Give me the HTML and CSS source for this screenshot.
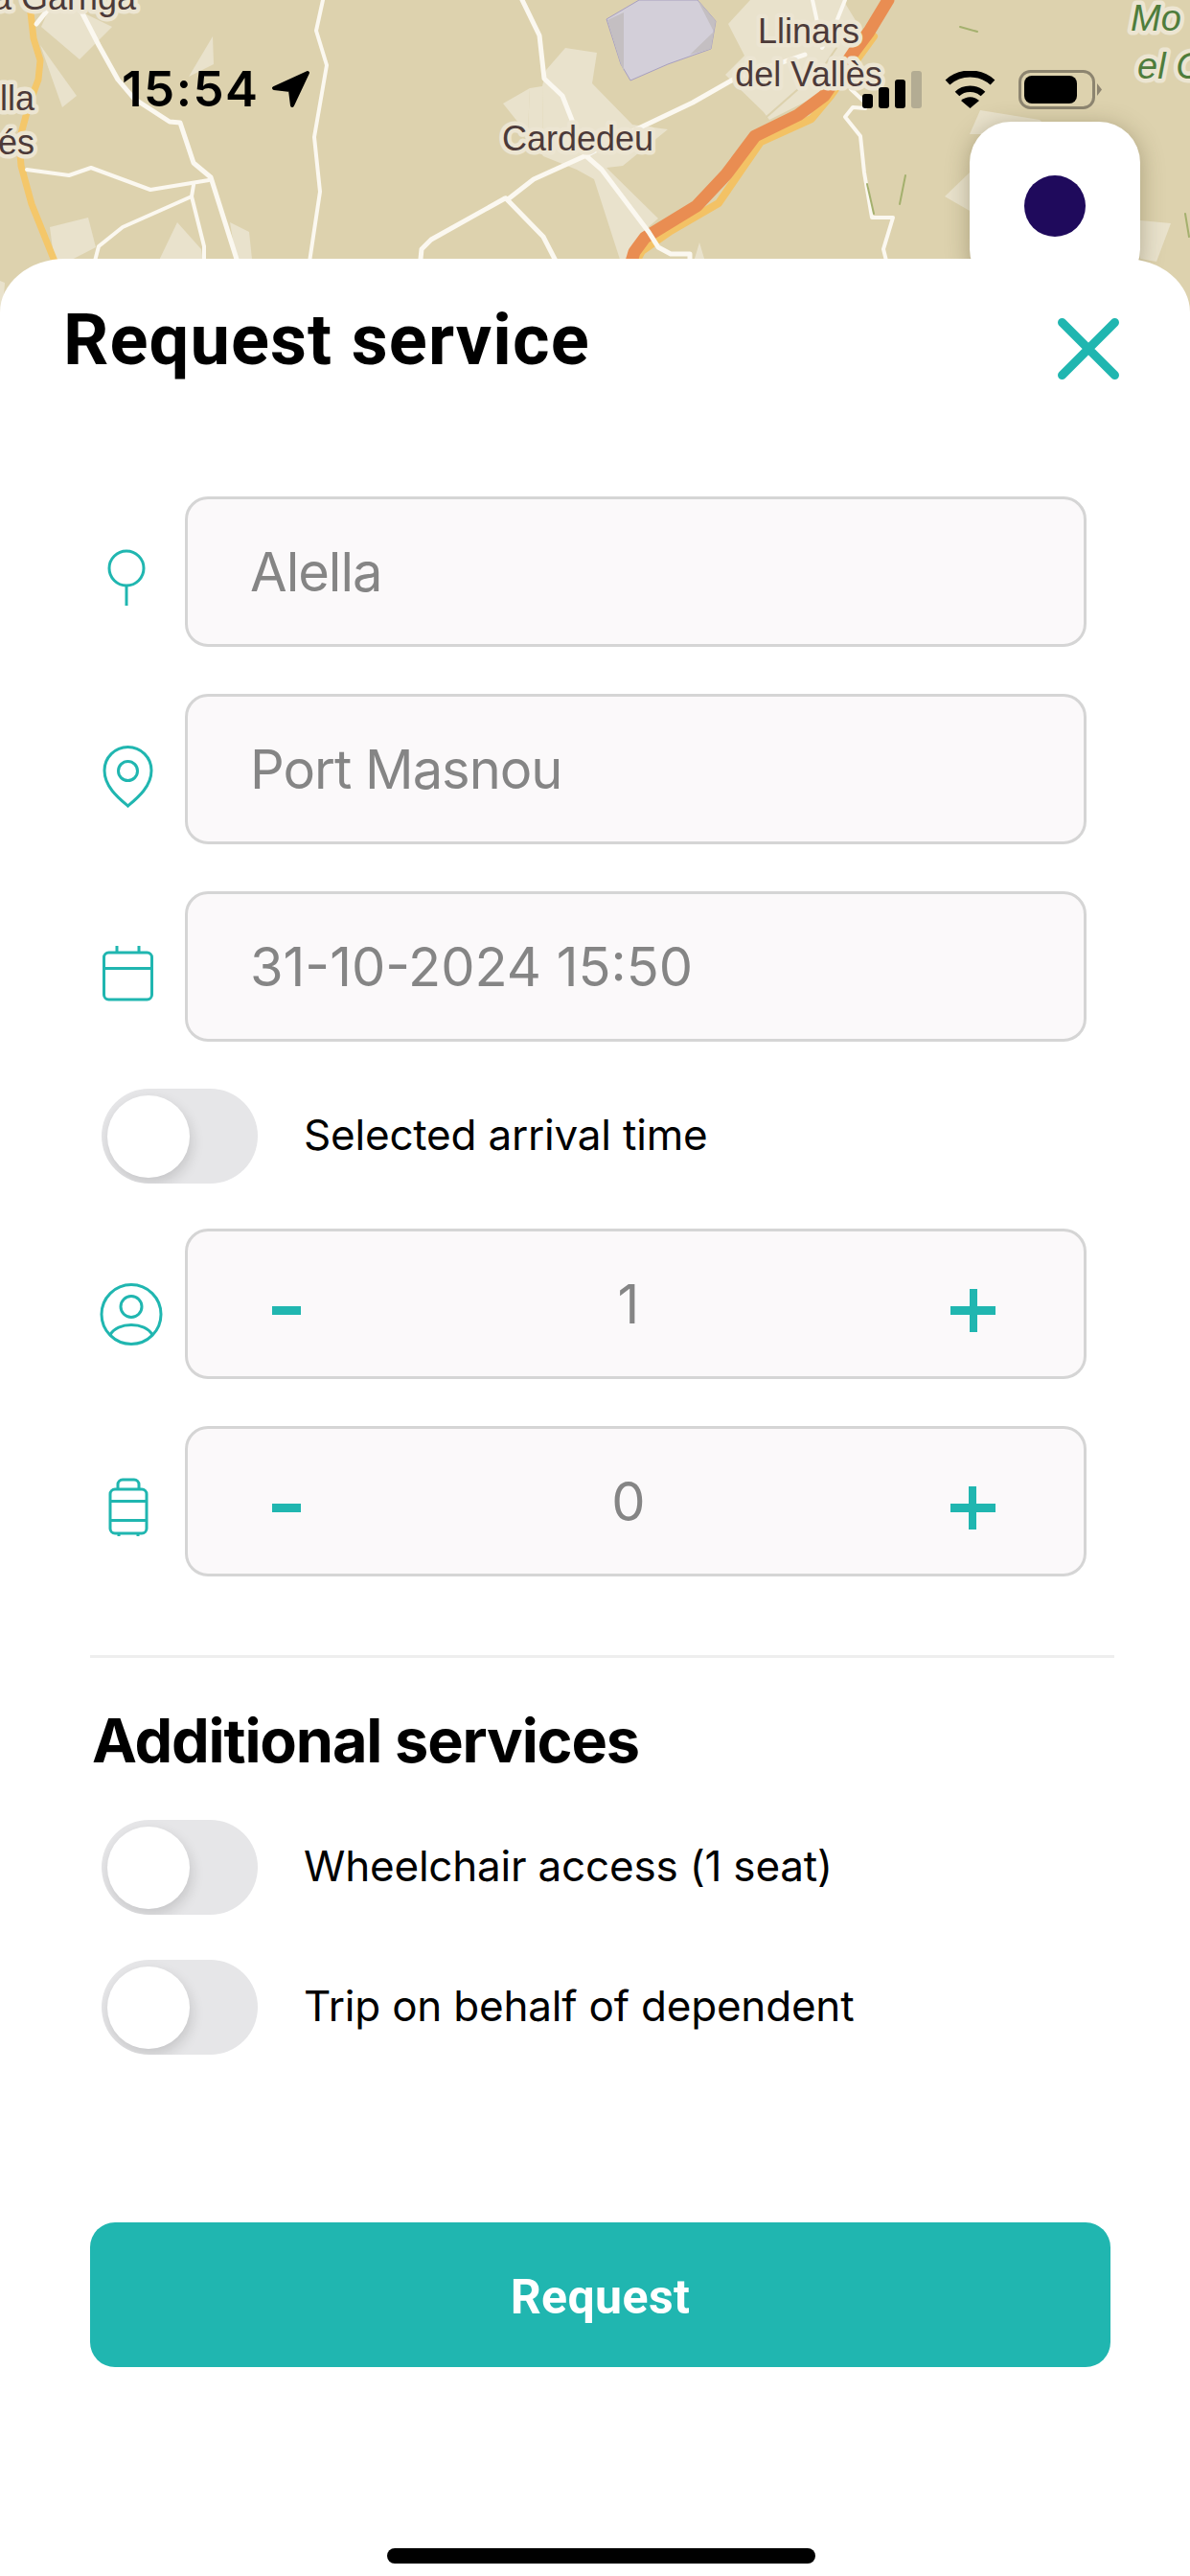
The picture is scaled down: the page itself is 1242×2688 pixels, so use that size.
FILE: index.html
```html
<!DOCTYPE html>
<html lang="en">
<head>
<meta charset="utf-8">
<title>Request service</title>
<link rel="stylesheet" href="styles.css">
</head>
<body>
<div class="screen">
  <svg class="map" viewBox="0 0 1242 340" width="1242" height="340" xmlns="http://www.w3.org/2000/svg">
    <rect width="1242" height="340" fill="#ddd2ae"/>
    <g fill="#e9e2cc">
      <path d="M43 28L50 12L80 10L117 28L83 62Z"/>
      <path d="M42 47L80 100L65 112Z"/>
      <path d="M222 38L223 67L197 80Z"/>
      <path d="M52 237L92 227L100 258L67 275L57 275Z"/>
      <path d="M185 232L210 260L213 280L162 280Z"/>
      <path d="M240 232L260 242L264 280L248 280Z"/>
      <path d="M0 293L5 295L3 322L0 325Z"/>
      <path d="M760 25L783 0L880 0L900 33L867 93L803 125L797 117L757 78L777 58Z"/>
      <path d="M590 50L623 55L618 87L660 130L697 135L650 173L633 175L687 228L673 240L655 280L650 280L620 187L602 177L567 163L566 90L570 73Z"/>
      <path d="M525 108L553 92L551 137L545 133Z"/>
      <path d="M553 92L566 90L567 163L551 137Z"/>
      <path d="M730 253L738 280L722 280Z"/>
      <path d="M1023 115L1085 125L1100 140L1012 140Z"/>
      <path d="M986 205L1012 180L1012 220Z"/>
      <path d="M1190 230L1222 233L1207 273L1190 270Z"/>
    </g>
    <path d="M633 20L650 10L667 0L728 0L747 22L742 51L697 67L658 84L648 67Z" fill="#d3cfd9" stroke="#a79fc0" stroke-width="1"/>
    <path d="M634 21L651 13L651 74L648 67Z" fill="#c4bfc2"/>
    <path d="M728 0L747 22L742 51L720 57L745 33Z" fill="#c4bfc2"/>
    <g fill="none" stroke-linejoin="round" stroke-linecap="round">
      <path d="M800 122L833 93M873 50L847 88" stroke="#dcd1ad" stroke-width="2"/>
      <path d="M32 13L35 40L42 63L40 83L30 110L20 147L22 173L33 213L60 280" stroke="#f4c76a" stroke-width="7"/>
      <path d="M912 38L867 100L847 124L794 148L750 212L700 241L670 262L660 280" stroke="#f3c265" stroke-width="8"/>
      <path d="M927 0L907 33L892 53L860 100L833 120L788 142L758 182L727 215L673 248L662 263L657 280" stroke="#e98d52" stroke-width="13"/>
      <g stroke="#fbf8f0" stroke-width="5">
        <path d="M85 12L103 47L123 83L140 103L177 127L188 128L202 170L220 185L250 280"/>
        <path d="M38 25L50 10"/>
        <path d="M545 0L563 37L568 82L587 100L600 133"/>
        <path d="M840 57L767 82L723 107L660 137L610 163L557 187L530 208L527 207L450 250L440 260L438 280"/>
        <path d="M528 207L567 247L584 280"/>
        <path d="M612 163L628 177L677 242L687 258L700 265L720 265L720 280"/>
      </g>
      <g stroke="#fbf8f0" stroke-width="4">
        <path d="M28 177L72 183L95 175L157 198L218 188"/>
        <path d="M202 193L200 205L213 257L213 280"/>
        <path d="M200 205L128 237L103 257L97 280"/>
        <path d="M337 0L330 32L341 68L328 143L334 200L322 280"/>
        <path d="M882 0L870 30L858 50"/>
        <path d="M848 0L853 23"/>
        <path d="M888 93L903 107"/>
        <path d="M903 113L890 112L882 122L898 142L902 180L910 227L932 227L922 260L927 280"/>
      </g>
      <g stroke="#a4b06e" stroke-width="2">
        <path d="M905 192L912 223"/>
        <path d="M945 183L939 213"/>
        <path d="M1237 223L1241 247"/>
        <path d="M1002 28L1020 33"/>
      </g>
    </g>
    <g class="map-label">
      <text x="844" y="45" text-anchor="middle">Llinars</text>
      <text x="844" y="90" text-anchor="middle">del Vallès</text>
      <text x="603" y="157" text-anchor="middle">Cardedeu</text>
      <text x="0" y="115">lla</text>
      <text x="-2" y="161">és</text>
      <text x="-8" y="10">a Garriga</text>
    </g>
    <g class="map-label map-label-green">
      <text x="1180" y="32">Mo</text>
      <text x="1187" y="82">el C</text>
    </g>
  </svg>

  <div class="status">
    <span class="time">15:54</span>
    <svg class="arrow" viewBox="0 0 42 40" width="42" height="40"><path d="M38 3L3 19L20 21L22 37Z" fill="#000" stroke="#000" stroke-width="4" stroke-linejoin="round"/></svg>
    <span class="status-gap"></span>
    <svg class="signal" viewBox="0 0 62 39" width="62" height="39">
      <rect x="0" y="24" width="11" height="15" rx="3"/>
      <rect x="17" y="17" width="11" height="22" rx="3"/>
      <rect x="34" y="9" width="11" height="30" rx="3"/>
      <rect x="51" y="0" width="11" height="39" rx="3" class="signal-off"/>
    </svg>
    <svg class="wifi" viewBox="0 0 53 39" width="53" height="39">
      <path d="M3 12C16 0 37 0 50 12" fill="none" stroke="#000" stroke-width="7"/>
      <path d="M13 24C20 17 33 17 40 24" fill="none" stroke="#000" stroke-width="6.500"/>
      <path d="M17 31C23 26 30 26 36 31L26.500 39Z"/>
    </svg>
    <svg class="battery" viewBox="0 0 87 41" width="87" height="41">
      <rect x="1.500" y="1.500" width="77" height="38" rx="11" fill="none" stroke="#8d8570" stroke-width="3"/>
      <rect x="6" y="6" width="55" height="29" rx="8"/>
      <path d="M82 14L87 20.500L82 27Z" fill="#8d8570"/>
    </svg>
  </div>

  <div class="locate"><span class="locate-dot"></span></div>

  <main class="sheet">
    <header class="sheet-head">
      <h1 class="sheet-title">Request service</h1>
      <svg class="close" viewBox="0 0 64 64" width="64" height="64"><path d="M4.500 4.500L59.500 59.500M59.500 4.500L4.500 59.500" fill="none" stroke="#20b6b0" stroke-width="9" stroke-linecap="round"/></svg>
    </header>

    <form class="form">
      <div class="row">
        <svg class="row-icon" viewBox="0 0 80 80" width="80" height="80"><circle cx="38" cy="36" r="18"/><path d="M38 54V75"/></svg>
        <div class="field field-text">Alella</div>
      </div>
      <div class="row">
        <svg class="row-icon" viewBox="0 0 80 80" width="80" height="80"><path d="M39.500 78C30 70 15 58 15 41A24.500 24.500 0 1 1 64 41C64 58 49 70 39.500 78Z"/><circle cx="39.500" cy="41.500" r="10"/></svg>
        <div class="field field-text">Port Masnou</div>
      </div>
      <div class="row">
        <svg class="row-icon" viewBox="0 0 80 80" width="80" height="80"><rect x="14.500" y="25" width="50" height="49" rx="5"/><path d="M14.500 41.500H64.500M28 18V26M51 18V26"/></svg>
        <div class="field">31-10-2024 15:50</div>
      </div>
      <div class="toggle-row toggle-row-tight">
        <span class="toggle"><span class="knob"></span></span>
        <span class="toggle-label">Selected arrival time</span>
      </div>
      <div class="row">
        <svg class="row-icon" viewBox="0 0 80 80" width="80" height="80"><circle cx="43" cy="50.500" r="31"/><circle cx="43" cy="42.500" r="11"/><path d="M21 72C28 58 58 58 65 72"/></svg>
        <div class="field stepper"><span class="minus"></span><span class="count">1</span><span class="plus"></span></div>
      </div>
      <div class="row">
        <svg class="row-icon" viewBox="0 0 80 80" width="80" height="80"><rect x="21" y="27" width="38" height="46" rx="5"/><path d="M29 27V22A5 5 0 0 1 34 17H46A5 5 0 0 1 51 22V27M21 39.500H59M21 59.500H59M30 73V76M50 73V76"/></svg>
        <div class="field stepper"><span class="minus"></span><span class="count">0</span><span class="plus"></span></div>
      </div>
    </form>

    <hr class="divider">
    <h2 class="section-title">Additional services</h2>
    <div class="services">
      <div class="toggle-row">
        <span class="toggle"><span class="knob"></span></span>
        <span class="toggle-label">Wheelchair access (1 seat)</span>
      </div>
      <div class="toggle-row">
        <span class="toggle"><span class="knob"></span></span>
        <span class="toggle-label">Trip on behalf of dependent</span>
      </div>
    </div>

    <button class="submit" type="button">Request</button>
    <div class="home-bar"></div>
  </main>
</div>
</body>
</html>
```

FILE: styles.css
```css
* { box-sizing: border-box; }
html, body { margin: 0; padding: 0; background: #fff; }
body { font-family: Inter, "Noto Sans", sans-serif; color: #000; }

.screen { position: relative; width: 1242px; height: 2688px; overflow: hidden; background: #fff; }

.map { position: absolute; top: 0; left: 0; display: block; }
.map-label text { font-family: "Liberation Sans", Arial, sans-serif; font-size: 36px; fill: #4c3a39; stroke: #ece5d2; stroke-width: 9px; paint-order: stroke; stroke-linejoin: round; }
.map-label-green text { font-size: 38px; font-style: italic; fill: #4f7d3c; }

.status { position: absolute; top: 72px; left: 127px; width: 1023px; height: 42px; display: flex; align-items: center; }
.time { font-size: 51px; font-weight: 600; line-height: 42px; letter-spacing: 1.5px; width: 156px; }
.arrow { display: block; }
.status-gap { flex: 1; }
.signal, .wifi, .battery { display: block; }
.signal-off { fill: #b3ac93; }
.signal { margin-right: 24px; }
.wifi { margin-right: 24px; }

.locate { position: absolute; left: 1012px; top: 127px; width: 178px; height: 176px; border-radius: 43px; background: #fff; box-shadow: 0 4px 24px rgba(70, 60, 30, 0.35); display: flex; align-items: center; justify-content: center; }
.locate-dot { width: 64px; height: 64px; border-radius: 50%; background: #1f0a5c; }

.sheet { position: absolute; top: 270px; left: 0; width: 1242px; height: 2418px; background: #fff; border-radius: 68px 68px 0 0 / 56px 56px 0 0; }
.sheet-head { height: 248px; padding: 40px 74px 0 66px; display: flex; justify-content: space-between; align-items: flex-start; }
.sheet-title { margin: 0; font-family: Roboto, sans-serif; font-size: 74px; line-height: 90px; font-weight: 700; letter-spacing: 1.1px; }
.close { display: block; margin-top: 22px; }

.form { display: flex; flex-direction: column; gap: 49px; padding: 0 108px 0 94px; }
.row { display: flex; align-items: center; }
.row-icon { flex: none; display: block; width: 80px; height: 80px; margin-right: 19px; overflow: visible; fill: none; stroke: #20b6b0; stroke-width: 3px; }
.field { flex: 1; height: 157px; border: 3px solid #d5d5d5; border-radius: 24px; background: #fbf9fa; padding-left: 65px; display: flex; align-items: center; font-size: 56px; color: #858585; }
.field-text { letter-spacing: -1px; }
.stepper { justify-content: space-between; padding: 0 92px 0 88px; }
.minus { width: 30px; height: 9px; background: #20b6b0; margin-top: 14px; }
.plus { width: 47px; height: 45px; margin-top: 14px; background: linear-gradient(#20b6b0, #20b6b0) center / 47px 9px no-repeat, linear-gradient(#20b6b0, #20b6b0) center / 8px 45px no-repeat; }
.count { line-height: 1; margin-left: 6px; }

.toggle-row { display: flex; align-items: center; gap: 48px; margin-left: 12px; }
.toggle-row-tight { margin-bottom: -2px; }
.toggle { position: relative; display: block; flex: none; width: 163px; height: 99px; border-radius: 50px; background: #e6e6e8; overflow: hidden; }
.knob { position: absolute; left: 6px; top: 7px; width: 86px; height: 86px; border-radius: 50%; background: #fff; box-shadow: 2px 6px 14px rgba(0, 0, 0, 0.14); }
.toggle-label { font-size: 44px; line-height: 54px; letter-spacing: -0.2px; margin-bottom: 4px; color: #000; }

.divider { height: 3px; margin: 82px 79px 0 94px; border: 0; background: #eeeeee; }
.section-title { margin: 46px 0 0 96px; font-size: 63px; line-height: 80px; font-weight: 700; letter-spacing: -1.15px; }
.services { display: flex; flex-direction: column; gap: 47px; margin: 43px 0 0 94px; }

.submit { display: block; width: 1065px; height: 151px; margin: 175px 0 0 94px; padding: 5px 0 0; border: 0; border-radius: 26px; background: #20b6b0; color: #fff; font-family: Roboto, sans-serif; font-size: 50px; font-weight: 700; letter-spacing: 0.4px; }
.home-bar { width: 447px; height: 16px; margin: 189px 0 0 404px; border-radius: 8px; background: #000; }
```
